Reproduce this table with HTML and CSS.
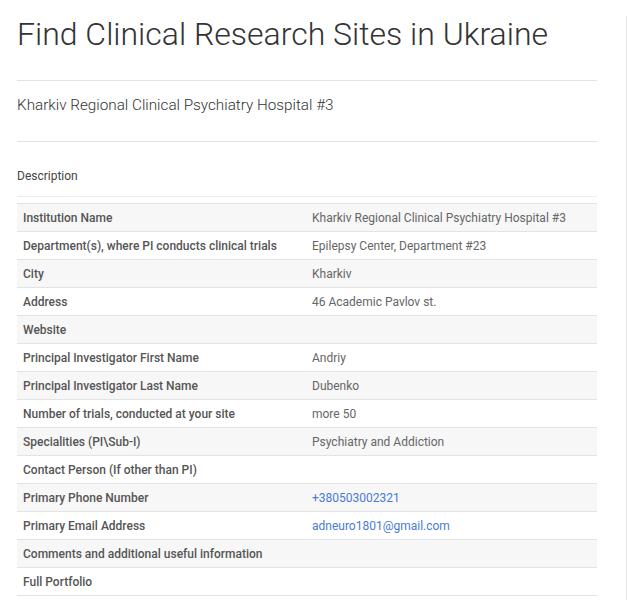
FILE: index.html
```html
<!DOCTYPE html>
<html lang="en">
<head>
    <meta charset="UTF-8">
    <meta name="viewport" content="width=device-width, initial-scale=1.0">
    <title>Find Clinical Research Sites in Ukraine</title>
    <link rel="stylesheet" href="styles.css">
</head>
<body>
    <div class="page">
        <div class="main">
            <h1>Find Clinical Research Sites in Ukraine</h1>
            <hr>
            <h2>Kharkiv Regional Clinical Psychiatry Hospital #3</h2>
            <hr>

            <div class="tabs">
                <div class="tab">Description</div>
            </div>

            <table class="site-table">
                <tr><th>Institution Name</th><td>Kharkiv Regional Clinical Psychiatry Hospital #3</td></tr>
                <tr><th>Department(s), where PI conducts clinical trials</th><td>Epilepsy Center, Department #23</td></tr>
                <tr><th>City</th><td>Kharkiv</td></tr>
                <tr><th>Address</th><td>46 Academic Pavlov st.</td></tr>
                <tr><th>Website</th><td></td></tr>
                <tr><th>Principal Investigator First Name</th><td>Andriy</td></tr>
                <tr><th>Principal Investigator Last Name</th><td>Dubenko</td></tr>
                <tr><th>Number of trials, conducted at your site</th><td>more 50</td></tr>
                <tr><th>Specialities (PI\Sub-I)</th><td>Psychiatry and Addiction</td></tr>
                <tr><th>Contact Person (If other than PI)</th><td></td></tr>
                <tr><th>Primary Phone Number</th><td><a href="#">+380503002321</a></td></tr>
                <tr><th>Primary Email Address</th><td><a href="#">adneuro1801@gmail.com</a></td></tr>
                <tr><th>Comments and additional useful information</th><td></td></tr>
                <tr><th>Full Portfolio</th><td></td></tr>
            </table>
        </div>
        <div class="sidebar"></div>
    </div>
</body>
</html>
```

FILE: styles.css
```css
body {
    margin: 0;
    padding: 0;
    background-color: #fff;
    color: #333;
    font-family: Roboto, "Liberation Sans", sans-serif;
}

.page {
    display: flex;
    gap: 29px;
}

.main {
    width: 580px;
    padding-left: 17px;
    flex-shrink: 0;
}

.sidebar {
    flex: 1;
    margin-top: 16px;
    border-left: 1px solid #e6e6e6;
    height: 600px;
}

h1 {
    font-size: 32px;
    font-weight: 300;
    line-height: 40px;
    margin: 14px 0 26px;
    color: #333;
}

hr {
    border: none;
    border-top: 1px solid #e3e3e3;
    margin: 0;
}

h2 {
    font-size: 15.25px;
    font-weight: 300;
    line-height: 20px;
    margin: 14px 0 26px;
    color: #333;
}

.tabs {
    border-bottom: 1px solid #ececec;
    margin-top: 26px;
    margin-bottom: 7px;
}

.tab {
    font-size: 12px;
    line-height: 16px;
    color: #444;
    padding-bottom: 12px;
}

.site-table {
    width: 100%;
    border-collapse: collapse;
    font-size: 12px;
    border-top: 1px solid #e3e3e3;
    margin-top: -1px;
}

.site-table th,
.site-table td {
    height: 27px;
    padding: 0 6px;
    text-align: left;
    border-bottom: 1px solid #e3e3e3;
    vertical-align: middle;
}

.site-table th {
    width: 277px;
    font-weight: 500;
    color: #555;
}

.site-table td {
    color: #666;
}

.site-table tr:nth-child(odd) {
    background-color: #f7f7f7;
}

.site-table a {
    color: #4a7bd6;
    text-decoration: none;
}
```
